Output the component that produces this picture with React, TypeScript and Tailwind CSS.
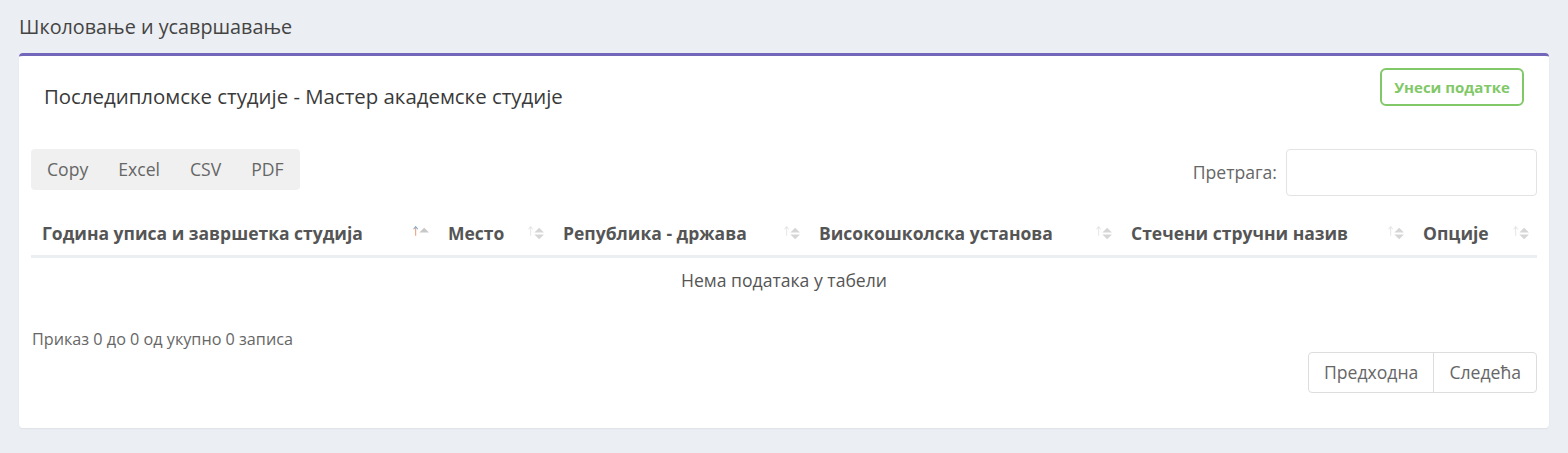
const SortIcon = ({ active = false }: { active?: boolean }) => (
  <svg width="17" height="17" viewBox="0 0 16 16" className="shrink-0">
    <line x1="2.5" y1="2" x2="2.5" y2="10" stroke={active ? '#e8a17a' : '#e6e6e6'} strokeWidth="1" />
    <path d="M0.5 4 L2.5 1.5 L4.5 4" fill="none" stroke={active ? '#8aa6c9' : '#e6e6e6'} strokeWidth="1" />
    <path d="M6 7 L10.5 2.5 L15 7 Z" fill={active ? '#c8c8c8' : '#d6d6d6'} />
    {!active && <path d="M6 9 L10.5 13.5 L15 9 Z" fill="#d6d6d6" />}
  </svg>
)

const columns = [
  { label: 'Година уписа и завршетка студија', w: 'w-[406px]', active: true },
  { label: 'Место', w: 'w-[115px]' },
  { label: 'Република - држава', w: 'w-[256px]' },
  { label: 'Високошколска установа', w: 'w-[312px]' },
  { label: 'Стечени стручни назив', w: 'w-[292px]' },
  { label: 'Опције', w: 'w-[125px]' },
]

export default function App() {
  return (
    <div
      className="min-h-[453px] bg-[#ebeef2] px-[19px] pt-[13px] text-[#555]"
      style={{ fontFamily: "'Open Sans', 'Noto Sans', sans-serif" }}
    >
      <h2 className="text-[19.8px] leading-[28px] text-[#444]">Школовање и усавршавање</h2>

      <div className="mt-[12px] rounded-[4px] border-t-[3px] border-[#7266ba] bg-white px-[12px] pb-[35px] shadow-[0_1px_2px_rgba(0,0,0,0.06)]">
        {/* Heading + add button */}
        <div className="flex h-[50px] items-start justify-between px-[13px] pt-[12px]">
          <h3 className="mt-[14px] text-[20.4px] leading-[28px] text-[#3a3a3a]">
            Последипломске студије - Мастер академске студије
          </h3>
          <button className="h-[38px] w-[144px] rounded-[6px] border-2 border-[#81c868] text-[15px] font-bold text-[#81c868]">
            Унеси податке
          </button>
        </div>

        {/* Export buttons + search */}
        <div className="mt-[43px] flex items-start justify-between">
          <div className="flex h-[41px] items-center rounded-[4px] bg-[#f0f0f0] px-[1px] text-[17.6px] text-[#666]">
            <span className="px-[15px]">Copy</span>
            <span className="px-[15px]">Excel</span>
            <span className="px-[15px]">CSV</span>
            <span className="px-[15px]">PDF</span>
          </div>
          <label className="flex items-center gap-[9px] text-[17.6px] text-[#666]">
            Претрага:
            <input className="h-[47px] w-[251px] rounded-[4px] border border-[#e3e3e3] outline-none" />
          </label>
        </div>

        {/* Table */}
        <table className="mt-[16px] w-full table-fixed border-collapse">
          <thead>
            <tr className="border-b-[3px] border-[#ebeff2]">
              {columns.map((c) => (
                <th key={c.label} className={`${c.w} h-[44px] pl-[11px] pr-[7px] text-left text-[17.5px] font-bold text-[#555]`}>
                  <div className="flex items-center justify-between">
                    <span className="whitespace-nowrap">{c.label}</span>
                    <SortIcon active={c.active} />
                  </div>
                </th>
              ))}
            </tr>
          </thead>
          <tbody>
            <tr>
              <td colSpan={6} className="pt-[10px] pb-[12px] text-center text-[17.6px] leading-[24px] text-[#555]">
                Нема података у табели
              </td>
            </tr>
          </tbody>
        </table>

        <div className="mt-[24px] pl-[1px] text-[16.2px] leading-[22px] text-[#666]">Приказ 0 до 0 од укупно 0 записа</div>

        <div className="mt-[2px] flex justify-end">
          <div className="flex h-[41px] rounded-[4px] border border-[#dddddd] text-[17.6px] text-[#666]">
            <span className="flex items-center border-r border-[#dddddd] px-[15px]">Предходна</span>
            <span className="flex items-center px-[15px]">Следећа</span>
          </div>
        </div>
      </div>
    </div>
  )
}
